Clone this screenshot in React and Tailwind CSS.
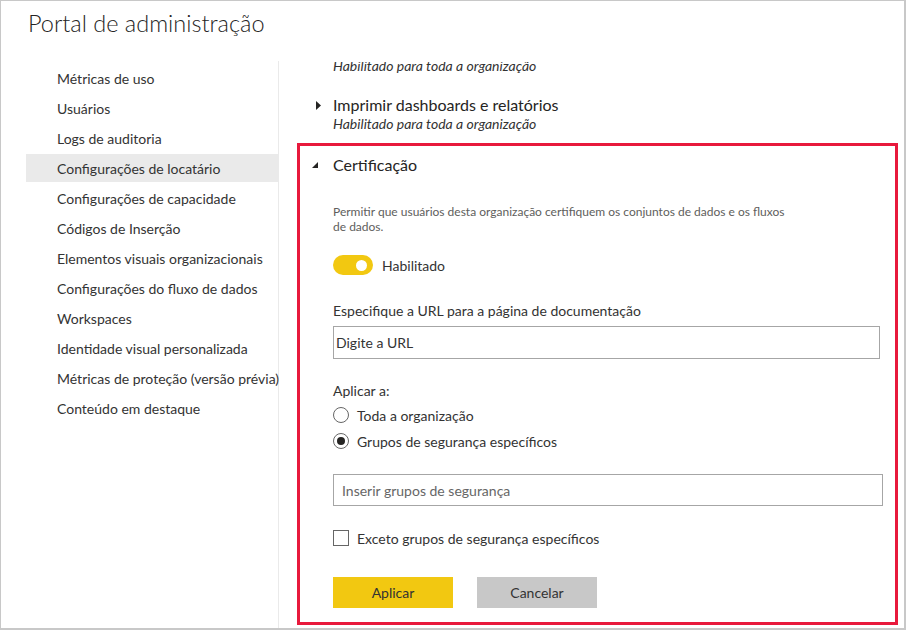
import React, { useState } from 'react';

const menuItems = [
  'Métricas de uso',
  'Usuários',
  'Logs de auditoria',
  'Configurações de locatário',
  'Configurações de capacidade',
  'Códigos de Inserção',
  'Elementos visuais organizacionais',
  'Configurações do fluxo de dados',
  'Workspaces',
  'Identidade visual personalizada',
  'Métricas de proteção (versão prévia)',
  'Conteúdo em destaque',
];

const ArrowRight = () => (
  <svg width="6" height="9" viewBox="0 0 6 9" className="shrink-0">
    <polygon points="0,0 5,4.5 0,9" fill="#252423" />
  </svg>
);

const ArrowDown = () => (
  <svg width="6" height="6" viewBox="0 0 6 6" className="shrink-0">
    <polygon points="6,0 6,6 0,6" fill="#252423" />
  </svg>
);

const Radio = ({ checked, label, onClick }) => (
  <div className="flex items-center h-[26px] cursor-pointer" onClick={onClick}>
    <span className="w-[16px] h-[16px] rounded-full border border-[#666] flex items-center justify-center">
      {checked && <span className="w-[8px] h-[8px] rounded-full bg-[#252423]" />}
    </span>
    <span className="ml-[8px] text-[14px] text-[#333]">{label}</span>
  </div>
);

const App = () => {
  const [scope, setScope] = useState('groups');
  const [enabled, setEnabled] = useState(true);
  const [except, setExcept] = useState(false);

  return (
    <div
      className="w-[906px] h-[630px] bg-white border-l border-t border-r-2 border-b-2 border-[#c8c8c8] overflow-hidden flex flex-col"
      style={{ fontFamily: "'Segoe UI', Lato, sans-serif" }}
    >
      <h1 className="h-[60px] shrink-0 pl-[27px] pt-[5px] text-[23.5px] font-light text-[#252423] leading-[34px]">
        Portal de administração
      </h1>

      <div className="flex flex-1 min-h-0">
        {/* Menu lateral */}
        <nav className="w-[278px] shrink-0 pl-[25px] pt-[1px] border-r border-[#eaeaea]">
          {menuItems.map((item) => (
            <div
              key={item}
              className={`h-[28px] mt-[2px] flex items-center pl-[31px] text-[14px] text-[#333] whitespace-nowrap ${
                item === 'Configurações de locatário' ? 'bg-[#eaeaea]' : ''
              }`}
            >
              {item}
            </div>
          ))}
        </nav>

        {/* Configurações */}
        <main className="flex-1 min-w-0 overflow-hidden pl-[18px] pr-[6px] mt-[1px]">
          <div className="-mt-[5px]">
            <div className="pl-[36px] text-[14px] italic leading-[18px] text-[#333]">
              Habilitado para toda a organização
            </div>

            <div className="mt-[20px] flex items-center h-[20px] pl-[19px]">
              <ArrowRight />
              <span className="ml-[11px] text-[16px] text-[#252423]">Imprimir dashboards e relatórios</span>
            </div>
            <div className="pl-[36px] text-[14px] italic leading-[18px] text-[#333]">
              Habilitado para toda a organização
            </div>

            <section className="mt-[10px] border-[3px] border-[#e8193c] h-[482px] pt-[9px]">
              <div className="flex items-center h-[20px] pl-[12px]">
                <ArrowDown />
                <span className="ml-[15px] text-[16px] text-[#252423]">Certificação</span>
              </div>

              <div className="pl-[33px]">
                <p className="mt-[29px] w-[458px] text-[12px] leading-[15px] text-[#605e5c]">
                  Permitir que usuários desta organização certifiquem os conjuntos de dados e os fluxos de dados.
                </p>

                <div className="mt-[21px] flex items-center h-[20px]">
                  <button
                    onClick={() => setEnabled(!enabled)}
                    className={`w-[40px] h-[20px] rounded-full flex items-center px-[6px] ${
                      enabled ? 'bg-[#f2c811] justify-end' : 'bg-[#c8c8c8] justify-start'
                    }`}
                  >
                    <span className="w-[11px] h-[11px] rounded-full bg-white" />
                  </button>
                  <span className="ml-[9px] text-[14px] text-[#333]">Habilitado</span>
                </div>

                <div className="mt-[28px] text-[14px] leading-[16px] text-[#333]">
                  Especifique a URL para a página de documentação
                </div>
                <input
                  placeholder="Digite a URL"
                  className="mt-[7px] block w-[547px] h-[33px] border border-[#a6a6a6] px-[2px] text-[14px] text-[#252423] placeholder:text-[#333] outline-none"
                />

                <div className="mt-[24px] text-[14px] leading-[16px] text-[#333]">Aplicar a:</div>
                <div className="mt-[3px]">
                  <Radio label="Toda a organização" checked={scope === 'all'} onClick={() => setScope('all')} />
                  <Radio label="Grupos de segurança específicos" checked={scope === 'groups'} onClick={() => setScope('groups')} />
                </div>

                <input
                  placeholder="Inserir grupos de segurança"
                  className="mt-[20px] block w-[550px] h-[32px] border border-[#a6a6a6] px-[8px] text-[14px] text-[#252423] placeholder:text-[#666] outline-none"
                />

                <div className="mt-[22px] flex items-center h-[20px] cursor-pointer" onClick={() => setExcept(!except)}>
                  <span className="w-[16px] h-[16px] border border-[#666] flex items-center justify-center text-[11px] leading-none">
                    {except ? '✓' : ''}
                  </span>
                  <span className="ml-[8px] text-[14px] text-[#333]">Exceto grupos de segurança específicos</span>
                </div>

                <div className="mt-[29px] flex gap-[24px]">
                  <button className="w-[120px] h-[31px] bg-[#f2c811] text-[14px] text-[#333]">Aplicar</button>
                  <button className="w-[120px] h-[31px] bg-[#c8c8c8] text-[14px] text-[#333]">Cancelar</button>
                </div>
              </div>
            </section>
          </div>
        </main>
      </div>
    </div>
  );
};

export default App;
